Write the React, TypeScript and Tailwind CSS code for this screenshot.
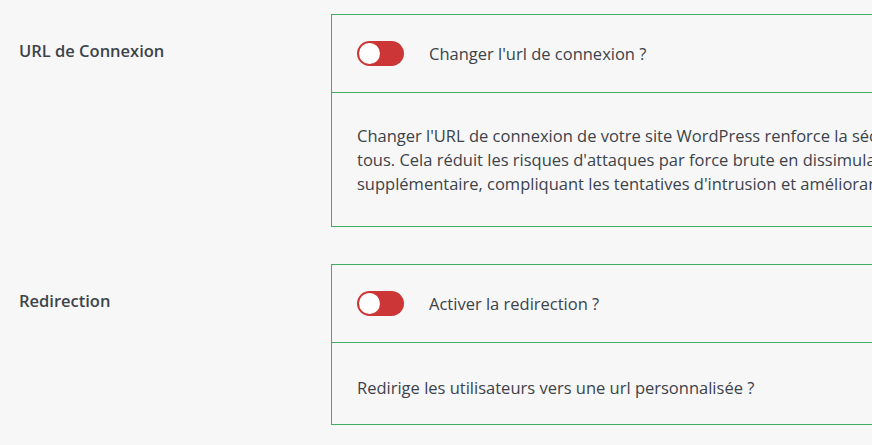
import React from "react";

const Toggle = () => (
  <span className="relative inline-flex h-[25px] w-[47px] shrink-0 items-center rounded-full bg-[#cc3636]">
    <span className="ml-[2px] h-[21px] w-[21px] rounded-full bg-white" />
  </span>
);

type Section = {
  label: string;
  toggle: string;
  lines: string[];
  pad: string;
};

const sections: Section[] = [
  {
    label: "URL de Connexion",
    toggle: "Changer l'url de connexion ?",
    lines: [
      "Changer l'URL de connexion de votre site WordPress renforce la sécurité en la rendant inconnue de",
      "tous. Cela réduit les risques d'attaques par force brute en dissimulant la page de connexion de manière",
      "supplémentaire, compliquant les tentatives d'intrusion et améliorant la protection globale du site.",
    ],
    pad: "pt-[31px] pb-[30px]",
  },
  {
    label: "Redirection",
    toggle: "Activer la redirection ?",
    lines: ["Redirige les utilisateurs vers une url personnalisée ?"],
    pad: "pt-[33px] pb-[24px]",
  },
];

export default function App() {
  return (
    <div
      className="h-[445px] w-[872px] overflow-hidden bg-[#f7f7f7] pt-[14px] text-[16.5px] leading-[24px] text-[#3c434a]"
      style={{ fontFamily: '"Open Sans", "Noto Sans", sans-serif' }}
    >
      <div className="flex flex-col gap-[37px]">
        {sections.map((s) => (
          <div key={s.label} className="flex">
            <div className="w-[331px] shrink-0 pl-[19px] pt-[25px] font-semibold">
              {s.label}
            </div>
            <div className="w-[760px] shrink-0 border border-[#3fae64]">
              <div className="flex h-[77px] items-center gap-[25px] pl-[25px]">
                <Toggle />
                <span>{s.toggle}</span>
              </div>
              <div className={`border-t border-[#3fae64] pl-[25px] whitespace-nowrap ${s.pad}`}>
                {s.lines.map((l) => (
                  <div key={l}>{l}</div>
                ))}
              </div>
            </div>
          </div>
        ))}
      </div>
    </div>
  );
}
